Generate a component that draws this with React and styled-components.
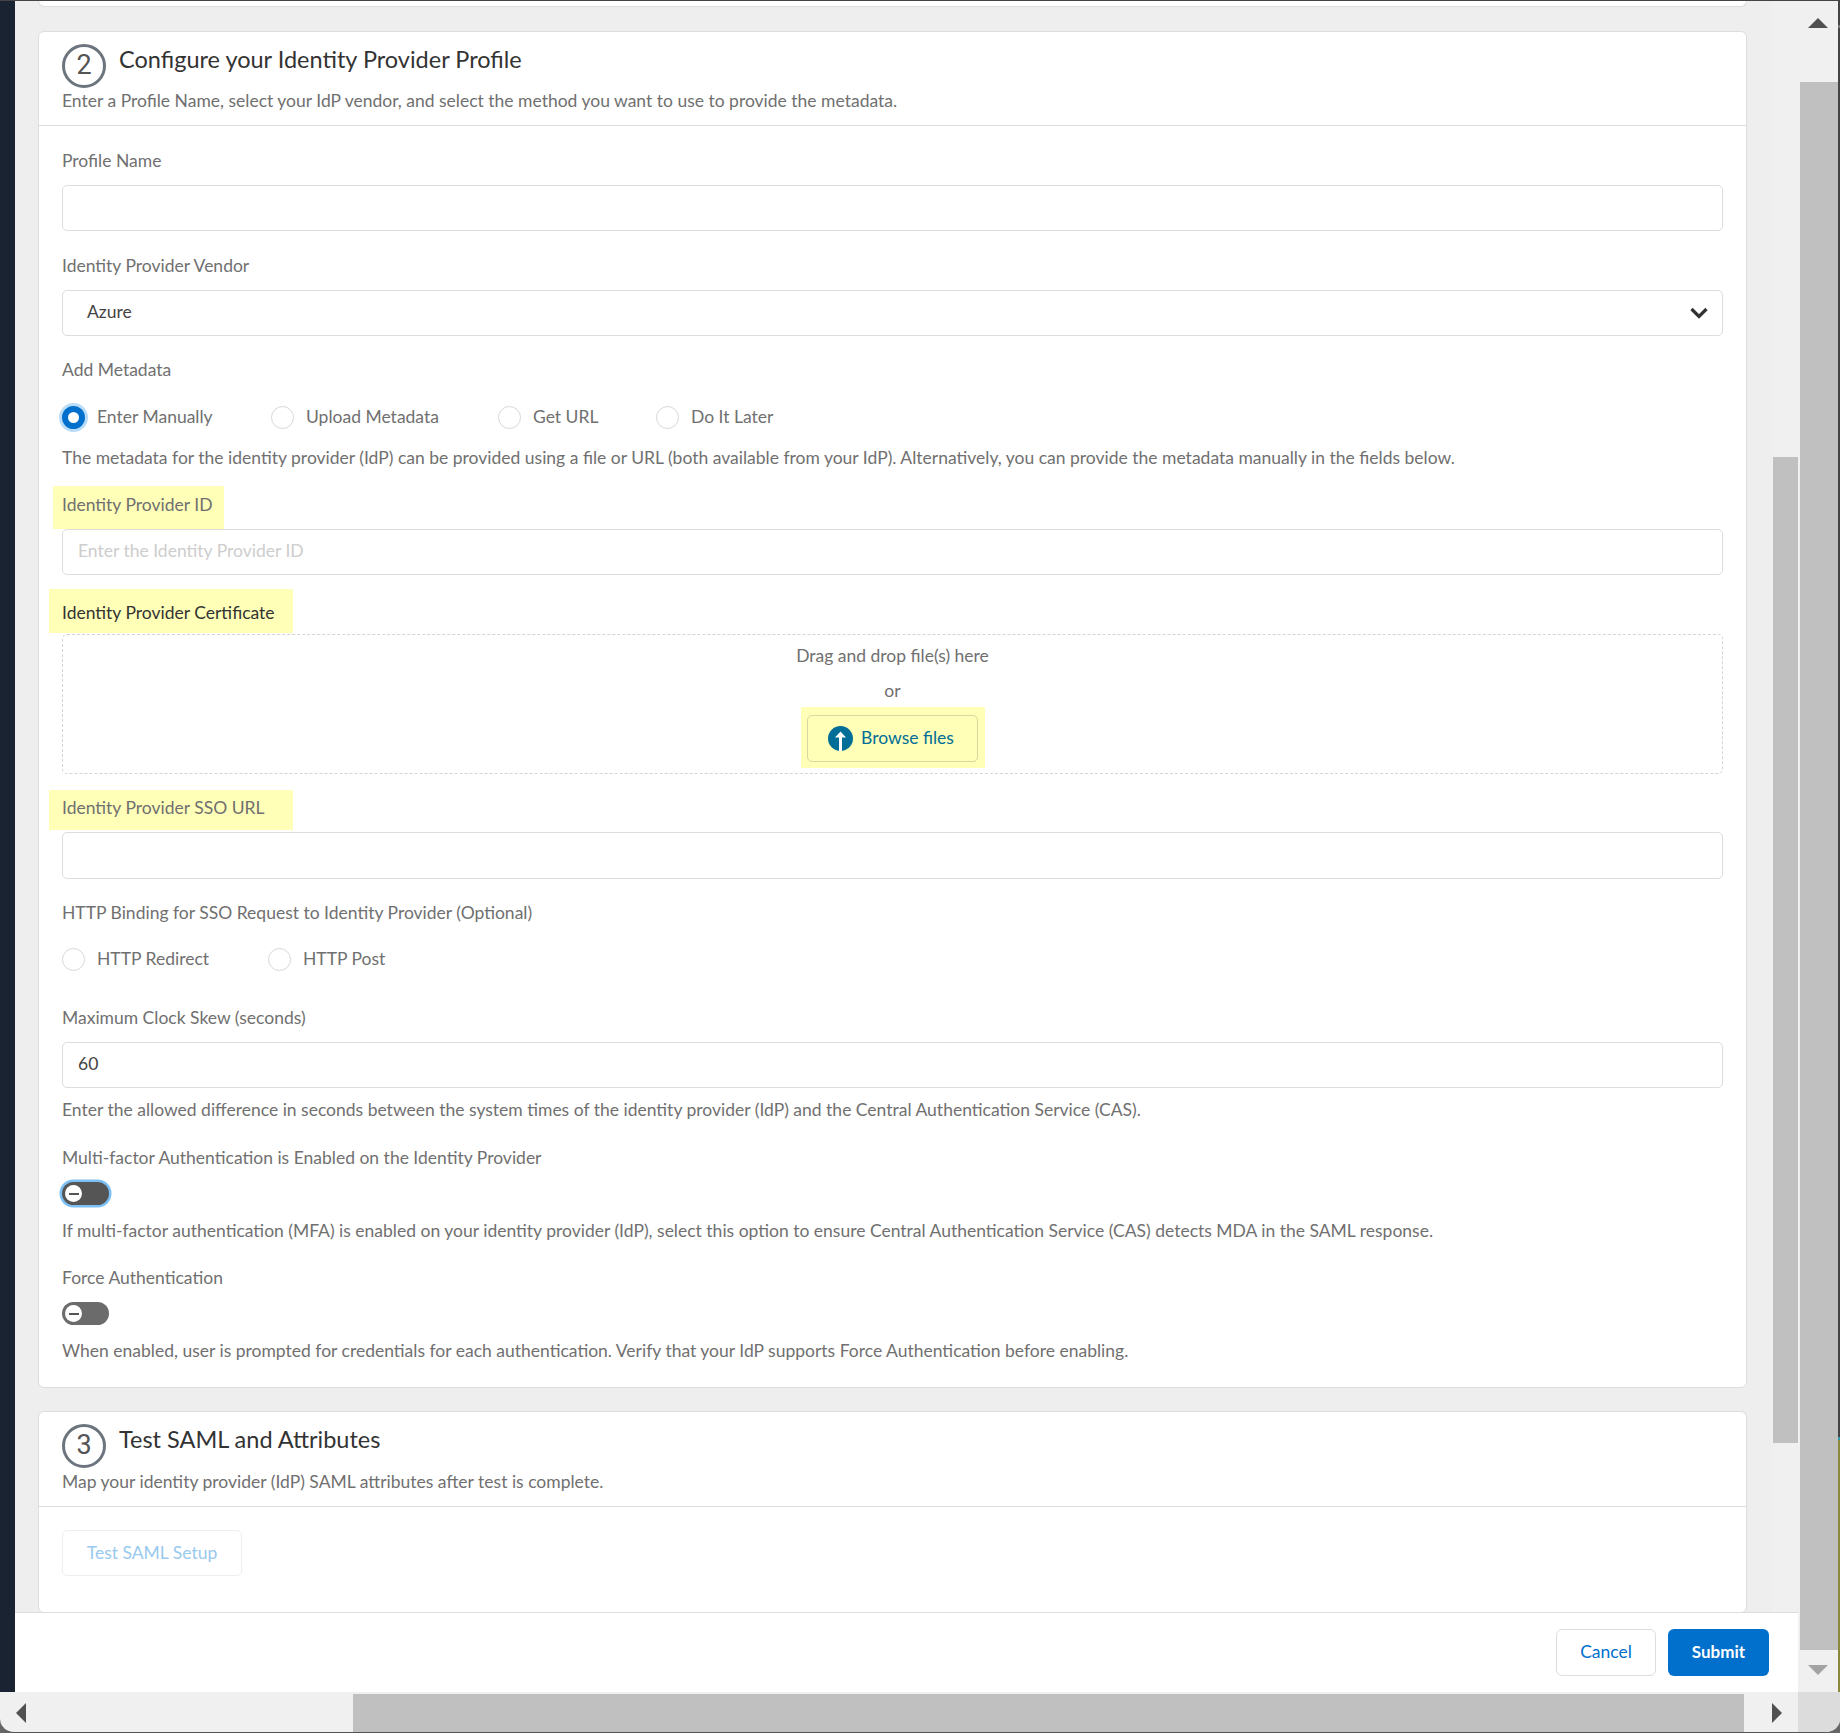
import React from "react";
import styled, { createGlobalStyle } from "styled-components";

const Global = createGlobalStyle`
  html, body { margin: 0; padding: 0; background: #fff; }
  * { box-sizing: border-box; }
  body { font-family: Lato, "Open Sans", sans-serif; font-variant-ligatures: common-ligatures; }
`;

const Screen = styled.div`
  width: 1840px;
  height: 1733px;
  display: flex;
  flex-direction: column;
  overflow: hidden;
  background: #666;
  border-top: 1px solid #444;
`;
const TopRow = styled.div`
  flex: 1;
  min-height: 0;
  display: flex;
`;
const Rail = styled.div`
  width: 15px;
  background: #1a2332;
`;
const Dialog = styled.div`
  flex: 1;
  min-width: 0;
  display: flex;
  flex-direction: column;
`;
const ScrollRow = styled.div`
  flex: 1;
  min-height: 0;
  display: flex;
  background: #eee;
`;
const Content = styled.div`
  flex: 1;
  min-width: 0;
  overflow: hidden;
  padding: 0 25px 0 23px;
`;
const PrevCard = styled.div`
  height: 6px;
  background: #fff;
  border: 1px solid #ddd;
  border-top: 0;
  border-radius: 0 0 6px 6px;
`;
const Card = styled.section`
  margin-top: 24px;
  background: #fff;
  border: 1px solid #ddd;
  border-radius: 6px;
`;
const LastCard = styled(Card)`
  margin-top: 23px;
  height: 201px;
  border-bottom: 0;
`;
const CardHeader = styled.header`
  height: ${(p) => (p.$tall ? 95 : 94)}px;
  padding: 12px 23px 0;
  border-bottom: 1px solid #ddd;
`;
const HeadRow = styled.div`
  display: flex;
  align-items: flex-start;
  gap: 13px;
`;
const StepCircle = styled.div`
  width: 44px;
  height: 44px;
  padding-bottom: 2px;
  border: 3px solid #6c757d;
  border-radius: 50%;
  display: flex;
  align-items: center;
  justify-content: center;
  font-family: Roboto, sans-serif;
  font-size: 27px;
  color: #555;
`;
const CardTitle = styled.h2`
  margin: 3px 0 0;
  font-size: 23.5px;
  line-height: 24px;
  font-weight: 400;
  color: #333;
`;
const Sub = styled.p`
  margin: ${(p) => (p.$tall ? 2 : 1)}px 0 0;
  font-size: 17.5px;
  line-height: 24px;
  color: #707070;
`;
const CardBody = styled.div`
  padding: 23px 23px 24px;
`;
const Label = styled.div`
  margin-top: ${(p) => p.$mt ?? 0}px;
  font-size: 17.5px;
  line-height: 24px;
  color: ${(p) => (p.$dark ? "#333" : "#707070")};
`;
const Mark = styled.span`
  display: inline-block;
  width: ${(p) => p.$w}px;
  background: #ffffb8;
  padding: ${(p) => p.$top}px 0 ${(p) => p.$bottom}px ${(p) => p.$left}px;
  margin: -${(p) => p.$top}px 0 -${(p) => p.$bottom}px -${(p) => p.$left}px;
`;
const Help = styled.p`
  margin: ${(p) => p.$mt ?? 0}px 0 0;
  font-size: 17.5px;
  line-height: 24px;
  color: #707070;
`;
const InputBox = styled.div`
  margin-top: ${(p) => p.$mt ?? 12}px;
  height: ${(p) => p.$h ?? 46}px;
  background: #fff;
  border: 1px solid #ddd;
  border-radius: 5px;
  padding: 0 ${(p) => (p.$select ? 14 : 15)}px 3px ${(p) => (p.$select ? 24 : 15)}px;
  display: flex;
  align-items: center;
  justify-content: space-between;
  font-size: 17.5px;
  color: ${(p) => (p.$placeholder ? "#cdcdcd" : "#444")};
  position: relative;
`;
const Chevron = styled.svg`
  width: 18px;
  height: 12px;
  margin-top: 3px;
`;
const RadioRow = styled.div`
  margin-top: ${(p) => p.$mt ?? 0}px;
  height: 24px;
  display: flex;
  align-items: center;
`;
const RadioItem = styled.label`
  display: flex;
  align-items: center;
  gap: 12px;
  width: ${(p) => p.$w}px;
  font-size: 17.5px;
  color: #707070;
`;
const RadioDot = styled.span`
  width: 23px;
  height: 23px;
  margin-top: 2px;
  border-radius: 50%;
  flex: none;
  ${(p) =>
    p.$on
      ? `background: #fff; border: 6px solid #0070cc; box-shadow: 0 0 0 3px #b9dcf8;`
      : `background: #fff; border: 1px solid #d8d8d8;`}
`;
const DropZone = styled.div`
  margin-top: 9px;
  height: 140px;
  border: 1px dashed #d4d4d4;
  border-radius: 5px;
  padding-top: 9px;
  display: flex;
  flex-direction: column;
  align-items: center;
  text-align: center;
  font-size: 17.5px;
  line-height: 24px;
  color: #707070;
`;
const OrText = styled.div`
  margin-top: 11px;
  margin-bottom: 1px;
`;
const ButtonMark = styled.div`
  margin-top: 3px;
  padding: 8px 7px 6px 6px;
  background: #ffffb8;
`;
const BrowseButton = styled.button`
  width: 171px;
  height: 47px;
  padding: 0 2px 2px 0;
  display: flex;
  align-items: center;
  justify-content: center;
  gap: 8px;
  background: transparent;
  border: 1px solid #d8d8a0;
  border-radius: 5px;
  font: inherit;
  color: #006e96;
`;
const UploadIcon = styled.svg`
  width: 25px;
  height: 25px;
  margin-top: 2px;
`;
const Toggle = styled.div`
  margin-top: 12px;
  width: 47px;
  height: 23px;
  border-radius: 12px;
  background: ${(p) => (p.$focus ? "#555" : "#6b6b6b")};
  box-shadow: ${(p) => (p.$focus ? "0 0 0 2.5px #7cc0f5" : "none")};
  display: flex;
  align-items: center;
  padding-left: 3px;
`;
const Knob = styled.span`
  width: 17px;
  height: 17px;
  border-radius: 50%;
  background: #fff;
  display: flex;
  align-items: center;
  justify-content: center;
  &::before {
    content: "";
    width: 10px;
    height: 2px;
    background: #555;
  }
`;
const TestButton = styled.button`
  display: block;
  width: 180px;
  height: 46px;
  padding: 0 0 2px;
  background: #fff;
  border: 1px solid #eee;
  border-radius: 5px;
  font: inherit;
  font-size: 17.5px;
  color: #99c9ee;
`;
const InnerBar = styled.div`
  width: 26px;
  background: #f0f0f0;
  padding: 456px 0 0 1px;
`;
const InnerThumb = styled.div`
  height: 986px;
  background: #c0c0c0;
`;
const Footer = styled.footer`
  height: 80px;
  background: #fff;
  border-top: 1px solid #ddd;
  display: flex;
  align-items: flex-start;
  justify-content: flex-end;
  gap: 12px;
  padding: 16px 29px 0 0;
`;
const CancelButton = styled.button`
  width: 100px;
  height: 47px;
  padding: 0 0 2px;
  background: #fff;
  border: 1px solid #ddd;
  border-radius: 6px;
  font: inherit;
  font-size: 17.5px;
  color: #0070cc;
`;
const SubmitButton = styled.button`
  width: 101px;
  height: 47px;
  padding: 0 0 2px;
  background: #0070cc;
  border: 0;
  border-radius: 6px;
  font: inherit;
  font-size: 17px;
  font-weight: 700;
  color: #fff;
`;
const OuterBar = styled.div`
  width: 40px;
  display: flex;
  flex-direction: column;
  background: #f0f0f0;
`;
const ArrowCell = styled.div`
  height: ${(p) => p.$h}px;
  display: flex;
  justify-content: center;
  align-items: flex-start;
  padding-top: ${(p) => p.$pt}px;
`;
const Triangle = styled.span`
  display: block;
  width: 0;
  height: 0;
  flex: none;
  ${(p) =>
    p.$dir === "up"
      ? `border-left: 10px solid transparent; border-right: 10px solid transparent; border-bottom: 10px solid ${p.$c};`
      : p.$dir === "down"
      ? `border-left: 10px solid transparent; border-right: 10px solid transparent; border-top: 10px solid ${p.$c};`
      : p.$dir === "left"
      ? `border-top: 10px solid transparent; border-bottom: 10px solid transparent; border-right: 10px solid ${p.$c};`
      : `border-top: 10px solid transparent; border-bottom: 10px solid transparent; border-left: 10px solid ${p.$c};`}
`;
const OuterThumb = styled.div`
  height: 1568px;
  margin-left: 2px;
  background: #c0c0c0;
`;
const Edge = styled.div`
  width: 2px;
  background: linear-gradient(#444 0 24px, #777 24px 27px, #444 27px 1436px, #2a9aa8 1436px 1439px, #8a8a3c 1439px);
`;
const BottomBar = styled.div`
  height: 41px;
  display: flex;
  background: #f0f0f0;
  border-bottom: 1px solid #555;
  border-radius: 0 0 14px 14px;
  overflow: hidden;
`;
const HLeft = styled.div`
  width: 353px;
  padding: 11px 0 0 16px;
`;
const HThumb = styled.div`
  width: 1391px;
  margin-top: 2px;
  background: #c0c0c0;
`;
const HRight = styled.div`
  width: 54px;
  padding: 11px 0 0 28px;
`;
const Corner = styled.div`
  width: 42px;
  background: #dcdcdc;
`;

const Field = ({ label, mt, markProps, dark }) => (
  <Label $mt={mt} $dark={dark}>
    {markProps ? <Mark {...markProps}>{label}</Mark> : label}
  </Label>
);

const StepHeader = ({ n, title, sub, tall }) => (
  <CardHeader $tall={tall}>
    <HeadRow>
      <StepCircle>{n}</StepCircle>
      <CardTitle>{title}</CardTitle>
    </HeadRow>
    <Sub $tall={tall}>{sub}</Sub>
  </CardHeader>
);

export default function App() {
  return (
    <Screen>
      <Global />
      <TopRow>
        <Rail />
        <Dialog>
          <ScrollRow>
            <Content>
              <PrevCard />
              <Card>
                <StepHeader
                  n="2"
                  title="Configure your Identity Provider Profile"
                  sub="Enter a Profile Name, select your IdP vendor, and select the method you want to use to provide the metadata."
                />
                <CardBody>
                  <Field label="Profile Name" />
                  <InputBox />
                  <Field label="Identity Provider Vendor" mt={23} />
                  <InputBox $select>
                    Azure
                    <Chevron viewBox="0 0 18 12">
                      <path d="M1.5 2 L9 9.5 L16.5 2" fill="none" stroke="#333" strokeWidth="3.2" />
                    </Chevron>
                  </InputBox>
                  <Field label="Add Metadata" mt={22} />
                  <RadioRow $mt={22}>
                    <RadioItem $w={209}><RadioDot $on />Enter Manually</RadioItem>
                    <RadioItem $w={227}><RadioDot />Upload Metadata</RadioItem>
                    <RadioItem $w={158}><RadioDot />Get URL</RadioItem>
                    <RadioItem $w={160}><RadioDot />Do It Later</RadioItem>
                  </RadioRow>
                  <Help $mt={18}>
                    The metadata for the identity provider (IdP) can be provided using a file or URL (both available from your IdP). Alternatively, you can provide the metadata manually in the fields below.
                  </Help>
                  <Field
                    label="Identity Provider ID"
                    mt={23}
                    markProps={{ $w: 171, $top: 7, $bottom: 12, $left: 9 }}
                  />
                  <InputBox $placeholder>Enter the Identity Provider ID</InputBox>
                  <Field
                    label="Identity Provider Certificate"
                    mt={26}
                    dark
                    markProps={{ $w: 244, $top: 12, $bottom: 8, $left: 13 }}
                  />
                  <DropZone>
                    <div>Drag and drop file(s) here</div>
                    <OrText>or</OrText>
                    <ButtonMark>
                      <BrowseButton>
                        <UploadIcon viewBox="0 0 25 25">
                          <circle cx="12.5" cy="12.5" r="12.5" fill="#006e96" />
                          <path d="M12.5 5.5 L18 11.5 H14 V25 H11 V11.5 H7 Z" fill="#fff" />
                        </UploadIcon>
                        Browse files
                      </BrowseButton>
                    </ButtonMark>
                  </DropZone>
                  <Field
                    label="Identity Provider SSO URL"
                    mt={22}
                    markProps={{ $w: 244, $top: 6, $bottom: 10, $left: 13 }}
                  />
                  <InputBox $h={47} />
                  <Field label="HTTP Binding for SSO Request to Identity Provider (Optional)" mt={22} />
                  <RadioRow $mt={21}>
                    <RadioItem $w={206}><RadioDot />HTTP Redirect</RadioItem>
                    <RadioItem $w={200}><RadioDot />HTTP Post</RadioItem>
                  </RadioRow>
                  <Field label="Maximum Clock Skew (seconds)" mt={36} />
                  <InputBox $mt={12}>60</InputBox>
                  <Help $mt={10}>
                    Enter the allowed difference in seconds between the system times of the identity provider (IdP) and the Central Authentication Service (CAS).
                  </Help>
                  <Field label="Multi-factor Authentication is Enabled on the Identity Provider" mt={24} />
                  <Toggle $focus><Knob /></Toggle>
                  <Help $mt={14}>
                    If multi-factor authentication (MFA) is enabled on your identity provider (IdP), select this option to ensure Central Authentication Service (CAS) detects MDA in the SAML response.
                  </Help>
                  <Field label="Force Authentication" mt={23} />
                  <Toggle><Knob /></Toggle>
                  <Help $mt={14}>
                    When enabled, user is prompted for credentials for each authentication. Verify that your IdP supports Force Authentication before enabling.
                  </Help>
                </CardBody>
              </Card>
              <LastCard>
                <StepHeader
                  tall
                  n="3"
                  title="Test SAML and Attributes"
                  sub="Map your identity provider (IdP) SAML attributes after test is complete."
                />
                <CardBody>
                  <TestButton disabled>Test SAML Setup</TestButton>
                </CardBody>
              </LastCard>
            </Content>
            <InnerBar>
              <InnerThumb />
            </InnerBar>
          </ScrollRow>
          <Footer>
            <CancelButton>Cancel</CancelButton>
            <SubmitButton>Submit</SubmitButton>
          </Footer>
        </Dialog>
        <OuterBar>
          <ArrowCell $h={81} $pt={17}><Triangle $dir="up" $c="#505050" /></ArrowCell>
          <OuterThumb />
          <ArrowCell $h={42} $pt={15}><Triangle $dir="down" $c="#a3a3a3" /></ArrowCell>
        </OuterBar>
        <Edge />
      </TopRow>
      <BottomBar>
        <HLeft><Triangle $dir="left" $c="#505050" /></HLeft>
        <HThumb />
        <HRight><Triangle $dir="right" $c="#505050" /></HRight>
        <Corner />
      </BottomBar>
    </Screen>
  );
}
